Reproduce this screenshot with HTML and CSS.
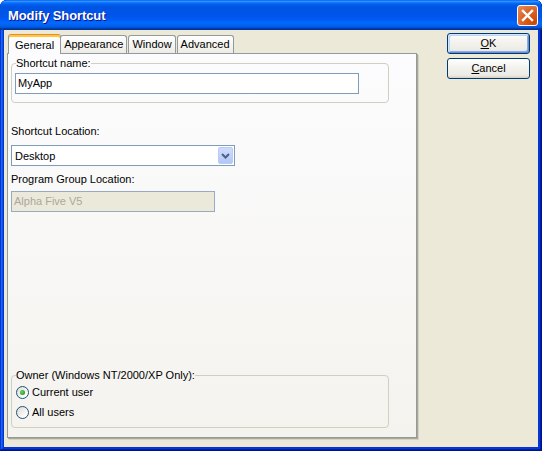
FILE: index.html
```html
<!DOCTYPE html>
<html>
<head>
<meta charset="utf-8">
<link rel="stylesheet" href="styles.css">
</head>
<body>
<div class="window">
  <div class="titlebar">
    <span class="title">Modify Shortcut</span>
    <div class="close">
      <svg width="13" height="13" viewBox="0 0 13 13"><path d="M2 2 L11 11 M11 2 L2 11" stroke="#fff" stroke-width="2.4" stroke-linecap="square" fill="none"/></svg>
    </div>
  </div>
  <div class="client">
    <div class="tabs-area">
      <div class="tabstrip">
        <div class="tab active">General</div>
        <div class="tab">Appearance</div>
        <div class="tab">Window</div>
        <div class="tab">Advanced</div>
      </div>
      <div class="panel">
        <fieldset class="group name-group">
          <legend>Shortcut name:</legend>
          <div class="textbox wide">MyApp</div>
        </fieldset>
        <div class="label loc-label">Shortcut Location:</div>
        <div class="combo">
          <span class="combo-text">Desktop</span>
          <div class="drop">
            <svg width="9" height="6" viewBox="0 0 9 6"><path d="M1 1 L4.5 4.5 L8 1" stroke="#4D6185" stroke-width="2" fill="none"/></svg>
          </div>
        </div>
        <div class="label pg-label">Program Group Location:</div>
        <div class="textbox disabled">Alpha Five V5</div>
        <div class="spacer"></div>
        <fieldset class="group owner-group">
          <legend>Owner (Windows NT/2000/XP Only):</legend>
          <div class="radio-row"><span class="radio checked"></span>Current user</div>
          <div class="radio-row"><span class="radio"></span>All users</div>
        </fieldset>
      </div>
    </div>
    <div class="buttons">
      <div class="btn default"><span class="u">O</span>K</div>
      <div class="btn"><span class="u">C</span>ancel</div>
    </div>
  </div>
</div>
</body>
</html>
```

FILE: styles.css
```css
html, body {
  margin: 0;
  padding: 0;
  background: #fff;
}
body {
  font-family: "Liberation Sans", Arial, sans-serif;
  font-size: 11px;
  color: #000;
}
.window {
  width: 542px;
  height: 451px;
  box-sizing: border-box;
  background: #0831D9;
  border-radius: 7px 7px 0 0;
  box-shadow: inset -1px -1px #00138c, inset 1px 1px #0831d9, inset -2px -2px #001ea0, inset 2px 2px #166aee, inset -3px -3px #003bda, inset 3px 3px #0855dd;
  display: flex;
  flex-direction: column;
  overflow: hidden;
}
.titlebar {
  height: 30px;
  flex: none;
  display: flex;
  align-items: center;
  padding: 0 4px 0 8px;
  border-radius: 7px 7px 0 0;
  background: linear-gradient(to bottom, #0058ee 0%, #3593ff 4%, #288eff 6%, #127dff 8%, #036ffc 10%, #0262ee 14%, #0057e5 20%, #0054e3 24%, #0055eb 56%, #005bf5 66%, #026afe 76%, #0062ef 86%, #0052d6 92%, #0040ab 94%, #003092 100%);
}
.title {
  flex: 1;
  color: #fff;
  font-family: "Liberation Sans", Arial, sans-serif;
  font-weight: bold;
  font-size: 13px;
  letter-spacing: -0.1px;
  text-shadow: 1px 1px #0f1089;
  margin-top: 1px;
}
.close {
  width: 19px;
  height: 19px;
  border: 1px solid #fff;
  border-radius: 3px;
  display: flex;
  align-items: center;
  justify-content: center;
  background: radial-gradient(circle at 85% 85%, #cc4600 0%, #dc6527 55%, #e58e64 100%);
  margin-top: 1px;
}
.client {
  flex: 1;
  margin: 0 4px 4px 4px;
  background: #ECE9D8;
  display: flex;
  padding: 3px 0 0 3px;
}
.tabs-area {
  width: 412px;
  display: flex;
  flex-direction: column;
}
.tabstrip {
  height: 20px;
  display: flex;
  align-items: flex-end;
  padding-left: 1px;
  position: relative;
  z-index: 2;
}
.tab {
  height: 17px;
  line-height: 17px;
  padding: 0 3px;
  border: 1px solid #919B9C;
  border-bottom: none;
  border-radius: 3px 3px 0 0;
  background: linear-gradient(to bottom, #ffffff 0%, #f4f3ee 60%, #ecebe6 100%);
  margin-right: 1px;
}
.tab.active {
  height: 19px;
  line-height: 21px;
  padding: 0 6px;
  margin-bottom: -1px;
  border-top: 1px solid #E68B2C;
  box-shadow: inset 0 2px #FFC73C;
  background: #FCFCFE;
  margin-right: -1px;
  position: relative;
  z-index: 3;
}
.panel {
  width: 410px;
  height: 385px;
  box-sizing: border-box;
  border: 1px solid #919B9C;
  background: linear-gradient(to bottom, #FCFCFE 0%, #F4F3EE 100%);
  box-shadow: 1px 1px 0 #ACA899, 2px 2px 0 #D6D2C2;
  display: flex;
  flex-direction: column;
  padding: 0 0 9px 3px;
}
.group {
  margin: 3px 0 0 0;
  width: 378px;
  box-sizing: border-box;
  border: 1px solid #D0D0BF;
  border-radius: 4px;
  padding: 0 3px 8px 3px;
}
.group legend {
  padding: 0;
  margin-left: 1px;
  line-height: 13px;
}
.textbox {
  height: 21px;
  box-sizing: border-box;
  border: 1px solid #7F9DB9;
  background: #fff;
  padding: 0 2px;
  line-height: 19px;
}
.textbox.wide {
  width: 344px;
  margin-top: 3px;
}
.label {
  line-height: 13px;
}
.loc-label {
  margin-top: 22px;
}
.combo {
  margin-top: 7px;
  width: 224px;
  height: 21px;
  box-sizing: border-box;
  border: 1px solid #7F9DB9;
  background: #fff;
  display: flex;
  align-items: center;
  padding: 1px;
}
.combo-text {
  flex: 1;
  padding-left: 2px;
}
.drop {
  width: 15px;
  height: 17px;
  box-sizing: border-box;
  border: 1px solid #B9CBF7;
  border-radius: 2px;
  background: linear-gradient(to bottom, #CFDBFB 0%, #C1D3FB 50%, #B2C6F6 100%);
  display: flex;
  align-items: center;
  justify-content: center;
}
.pg-label {
  margin-top: 7px;
}
.textbox.disabled {
  margin-top: 5px;
  width: 204px;
  background: #EBE9DA;
  color: #ACA899;
  border-color: #9AAAC0;
}
.spacer {
  flex: 1;
}
.owner-group {
  padding-bottom: 5px;
}
.radio-row {
  display: flex;
  align-items: center;
  height: 20px;
  padding-left: 1px;
}
.radio {
  width: 13px;
  height: 13px;
  box-sizing: border-box;
  border: 1px solid #1C5180;
  border-radius: 50%;
  background: linear-gradient(135deg, #DCD9CE 0%, #FFFFFF 80%);
  margin-right: 3px;
  display: flex;
  align-items: center;
  justify-content: center;
}
.radio.checked::after {
  content: "";
  width: 5px;
  height: 5px;
  border-radius: 50%;
  background: radial-gradient(circle at 40% 40%, #6FD46F 0%, #21A121 70%);
}
.buttons {
  margin-left: 28px;
  display: flex;
  flex-direction: column;
  gap: 4px;
}
.btn {
  width: 83px;
  height: 21px;
  box-sizing: border-box;
  border: 1px solid #003C74;
  border-radius: 3px;
  background: linear-gradient(to bottom, #FFFFFF 0%, #F4F3EE 40%, #ECEBE6 85%, #D6D0C5 100%);
  text-align: center;
  line-height: 19px;
}
.btn.default {
  box-shadow: inset 1px 1px #CEE7FF, inset -1px -1px #698CD5, inset 2px 2px #BCD4F6, inset -2px -2px #89ADE4;
}
.u {
  text-decoration: underline;
}
```
